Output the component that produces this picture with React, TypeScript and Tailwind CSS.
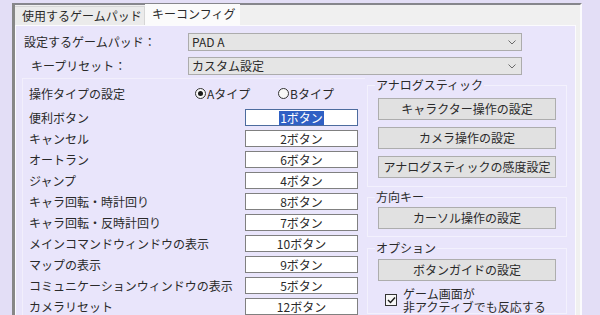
import React from "react";

const ROWS: [string, string][] = [
  ["便利ボタン", "1ボタン"],
  ["キャンセル", "2ボタン"],
  ["オートラン", "6ボタン"],
  ["ジャンプ", "4ボタン"],
  ["キャラ回転・時計回り", "8ボタン"],
  ["キャラ回転・反時計回り", "7ボタン"],
  ["メインコマンドウィンドウの表示", "10ボタン"],
  ["マップの表示", "9ボタン"],
  ["コミュニケーションウィンドウの表示", "5ボタン"],
  ["カメラリセット", "12ボタン"],
];

function Select({ value }: { value: string }) {
  return (
    <div className="flex h-[18px] w-[334px] items-center justify-between border border-[#acacac] bg-[#e5e5e5] pl-[3px] pr-[5px]">
      <span>{value}</span>
      <svg width="8" height="5" viewBox="0 0 8 5" className="mt-[1px]">
        <path d="M0.5 0.5 L4 4 L7.5 0.5" fill="none" stroke="#6a6a6a" strokeWidth="1" />
      </svg>
    </div>
  );
}

function Radio({ checked, label }: { checked: boolean; label: string }) {
  return (
    <div className="flex items-center gap-[1px]">
      <span className="flex h-[11px] w-[11px] items-center justify-center rounded-full border border-[#333] bg-[#f8f8f8]">
        {checked && <span className="h-[5px] w-[5px] rounded-full bg-[#1a1a1a]" />}
      </span>
      <span>{label}</span>
    </div>
  );
}

function Btn({ children }: { children: React.ReactNode }) {
  return (
    <div className="flex h-[22px] w-[178px] items-center justify-center border border-[#adadad] bg-[#e1e1e1]">
      {children}
    </div>
  );
}

export default function App() {
  return (
    <div className="h-[315px] w-[600px] overflow-hidden bg-[#e3def6] pl-[12px] pt-[3px] font-['Noto_Sans_CJK_JP','Noto_Sans_CJK_SC',sans-serif] text-[12px] leading-[14px] text-[#2a2a2a]">
      <div className="h-[330px] w-[570px] border-l-[3px] border-r-[2px] border-t-[2px] border-l-[#878787] border-r-[#fbfbfd] border-t-[#86868c] bg-[#f0f0f0]">
        {/* tabs */}
        <div className="flex h-[20px] items-end">
          <div className="h-[19px] w-[130px] border-r border-t border-[#d6d6d6] bg-[#ebebeb] pl-[7px] leading-[18px]">
            使用するゲームパッド
          </div>
          <div className="h-[21px] w-[95px] bg-[#fbfbfb] pl-[7px] leading-[20px]">キーコンフィグ</div>
        </div>

        {/* panel */}
        <div className="h-[300px] w-[561px] border border-[#fbfbfd] bg-[#e9e5fb]">
          <div className="flex flex-col gap-[6px] pt-[7px]">
            <div className="flex items-center">
              <div className="w-[172px] pl-[8px]">設定するゲームパッド：</div>
              <Select value="PAD A" />
            </div>
            <div className="flex items-center">
              <div className="w-[172px] pl-[15px]">キープリセット：</div>
              <Select value="カスタム設定" />
            </div>
          </div>

          <div className="mt-[3px] flex pl-[6px]">
            {/* left group */}
            <div className="w-[343px] border-l border-t border-[#f2effc] pl-[6px] pt-[6px]">
              <div className="flex h-[17px] items-center">
                <div className="w-[166px]">操作タイプの設定</div>
                <div className="w-[83px]">
                  <Radio checked label="Aタイプ" />
                </div>
                <Radio checked={false} label="Bタイプ" />
              </div>
              <div className="mt-[7px] flex flex-col gap-[4px]">
                {ROWS.map(([label, value], i) => (
                  <div key={i} className="flex h-[17px] items-center">
                    <div className="w-[216px]">{label}</div>
                    <div
                      className={
                        i === 0
                          ? "flex h-[17px] w-[113px] items-center justify-center border border-[#4d6c9e] bg-white"
                          : "flex h-[17px] w-[113px] items-center justify-center border border-[#808080] bg-white"
                      }
                    >
                      {i === 0 ? <span className="bg-[#2f60c4] px-[1px] text-white">{value}</span> : value}
                    </div>
                  </div>
                ))}
              </div>
            </div>

            {/* right groups */}
            <div className="ml-[2px] flex w-[200px] flex-col">
              <fieldset className="mt-[1px] border border-[#f3f1fd] p-0">
                <legend className="ml-[7px] px-[1px] leading-[12px]">アナログスティック</legend>
                <div className="flex flex-col gap-[7px] pb-[8px] pl-[10px] pt-[7px]">
                  <Btn>キャラクター操作の設定</Btn>
                  <Btn>カメラ操作の設定</Btn>
                  <Btn>アナログスティックの感度設定</Btn>
                </div>
              </fieldset>
              <fieldset className="mt-[4px] border border-[#f3f1fd] p-0">
                <legend className="ml-[7px] px-[1px] leading-[12px]">方向キー</legend>
                <div className="flex flex-col pb-[7px] pl-[10px] pt-[4px]">
                  <Btn>カーソル操作の設定</Btn>
                </div>
              </fieldset>
              <fieldset className="mt-[5px] border border-[#f3f1fd] p-0">
                <legend className="ml-[7px] px-[1px] leading-[12px]">オプション</legend>
                <div className="flex flex-col pl-[10px] pt-[5px]">
                  <Btn>ボタンガイドの設定</Btn>
                </div>
                <div className="mt-[6px] flex pl-[17px]">
                  <span className="mt-[7px] flex h-[12px] w-[12px] items-center justify-center border border-[#333] bg-[#f6f6f6]">
                    <svg width="9" height="8" viewBox="0 0 9 8">
                      <path d="M1 4 L3.5 6.5 L8 1.5" fill="none" stroke="#1a1a1a" strokeWidth="1.4" />
                    </svg>
                  </span>
                  <p className="pl-[6px] leading-[13px]">
                    ゲーム画面が
                    <br />
                    非アクティブでも反応する
                  </p>
                </div>
              </fieldset>
            </div>
          </div>
        </div>
      </div>
    </div>
  );
}
